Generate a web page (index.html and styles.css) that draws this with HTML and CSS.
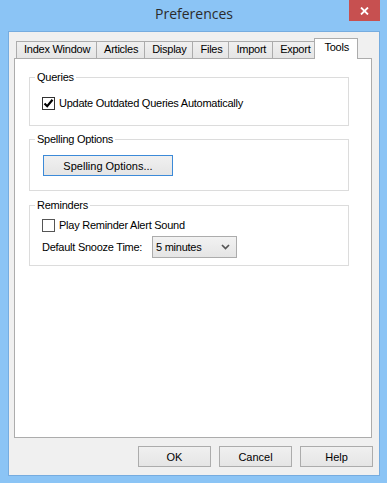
FILE: index.html
```html
<!DOCTYPE html>
<html lang="en">
<head>
  <meta charset="UTF-8">
  <title>Preferences</title>
  <link rel="stylesheet" href="styles.css">
</head>
<body>
  <div class="window">
    <div class="titlebar">
      <span class="title">Preferences</span>
      <button class="close" aria-label="Close">
        <svg width="9" height="8" viewBox="0 0 9 8"><path d="M1 0.5 L8 7.5 M8 0.5 L1 7.5" stroke="#fff" stroke-width="1.8" fill="none"/></svg>
      </button>
    </div>

    <div class="client">
      <div class="tabs">
        <div class="tab">Index Window</div>
        <div class="tab">Articles</div>
        <div class="tab">Display</div>
        <div class="tab">Files</div>
        <div class="tab">Import</div>
        <div class="tab">Export</div>
        <div class="tab active">Tools</div>
      </div>

      <div class="panel">
        <fieldset class="group group-queries">
          <legend>Queries</legend>
          <div class="group-body">
            <label class="check-row">
              <span class="box">
                <svg width="11" height="11" viewBox="0 0 11 11"><polyline points="1.5,5.5 4.2,8.2 9.5,1.8" stroke="#000" stroke-width="2.2" fill="none"/></svg>
              </span>
              Update Outdated Queries Automatically
            </label>
          </div>
        </fieldset>

        <fieldset class="group group-spelling">
          <legend>Spelling Options</legend>
          <div class="group-body">
            <button class="btn btn-default">Spelling Options...</button>
          </div>
        </fieldset>

        <fieldset class="group group-reminders">
          <legend>Reminders</legend>
          <div class="group-body">
            <label class="check-row">
              <span class="box box-empty"></span>
              Play Reminder Alert Sound
            </label>
            <div class="field-row">
              <span class="field-label">Default Snooze Time:</span>
              <div class="select">
                <span>5 minutes</span>
                <svg width="9" height="6" viewBox="0 0 9 6"><polyline points="1,1 4.5,4.5 8,1" stroke="#555" stroke-width="1.7" fill="none"/></svg>
              </div>
            </div>
          </div>
        </fieldset>
      </div>

      <div class="actions">
        <button class="btn">OK</button>
        <button class="btn">Cancel</button>
        <button class="btn">Help</button>
      </div>
    </div>
  </div>
</body>
</html>
```

FILE: styles.css
```css
body {
  margin: 0;
  font-family: "Liberation Sans", Arial, sans-serif;
  font-size: 11px;
  letter-spacing: -0.25px;
  color: #000;
}
.window {
  height: 483px;
  box-sizing: border-box;
  background: #8bc4f5;
  padding: 0 7px 7px 8px;
  display: flex;
  flex-direction: column;
}
.titlebar {
  height: 31px;
  flex: none;
  display: grid;
  grid-template-columns: 1fr auto 1fr;
}
.title {
  grid-column: 2;
  font-family: "Open Sans", sans-serif;
  font-size: 14px;
  letter-spacing: 0;
  line-height: 27px;
  color: #2b2b2b;
}
.close {
  grid-column: 3;
  justify-self: end;
  width: 31px;
  height: 21px;
  padding: 0;
  border: 0;
  background: #c75050;
  display: flex;
  align-items: center;
  justify-content: center;
}
.client {
  flex: 1;
  display: flex;
  flex-direction: column;
  background: #f0f0f0;
  border: 1px solid #76acdf;
  padding: 6px 6px 8px 5px;
}
.tabs {
  flex: none;
  height: 20px;
  display: flex;
  align-items: flex-end;
  padding-left: 2px;
}
.tab {
  height: 17px;
  box-sizing: border-box;
  padding: 0 6px 0 7px;
  line-height: 15px;
  border: 1px solid #acacac;
  border-bottom: 0;
  margin-right: -1px;
  background: linear-gradient(#f0f0f0, #e5e5e5);
  white-space: nowrap;
}
.tab.active {
  height: 21px;
  line-height: 17px;
  padding: 0 8px 0 9px;
  margin: 0 0 -1px -2px;
  background: #fff;
  position: relative;
  z-index: 1;
}
.panel {
  flex: 1;
  background: #fff;
  border: 1px solid #acacac;
  margin-right: 1px;
  padding: 0 22px 0 14px;
}
.group {
  margin: 6px 0 0;
  padding: 0;
  border: 1px solid #dcdcdc;
  min-inline-size: auto;
}
.group-queries {
  margin-top: 11px;
}
.group-reminders {
  margin-top: 7px;
}
legend {
  margin-left: 5px;
  padding: 0 2px;
  line-height: 14px;
}
.group-queries .group-body {
  padding: 11px 8px 14px 12px;
}
.group-spelling .group-body {
  padding: 9px 8px 14px 13px;
}
.group-reminders .group-body {
  padding: 5px 8px 7px 12px;
}
.check-row {
  height: 16px;
  display: flex;
  align-items: center;
}
.box {
  width: 13px;
  height: 13px;
  box-sizing: border-box;
  border: 1px solid #333;
  background: #fff;
  margin-right: 4px;
  display: flex;
  align-items: center;
  justify-content: center;
}
.box-empty {
  border-color: #555;
}
.field-row {
  margin-top: 3px;
  display: flex;
  align-items: center;
}
.field-label {
  width: 110px;
}
.select {
  width: 85px;
  height: 22px;
  box-sizing: border-box;
  border: 1px solid #acacac;
  background: linear-gradient(#f2f2f2, #e5e5e5);
  padding: 0 6px 0 3px;
  display: flex;
  align-items: center;
  justify-content: space-between;
}
.btn {
  width: 73px;
  height: 21px;
  padding: 0;
  font: inherit;
  color: #000;
  border: 1px solid #acacac;
  background: linear-gradient(#f0f0f0, #e5e5e5);
}
.btn-default {
  width: 130px;
  border-color: #3c8ad8;
}
.actions {
  flex: none;
  margin-top: 8px;
  display: flex;
  justify-content: flex-end;
  gap: 8px;
}
```
